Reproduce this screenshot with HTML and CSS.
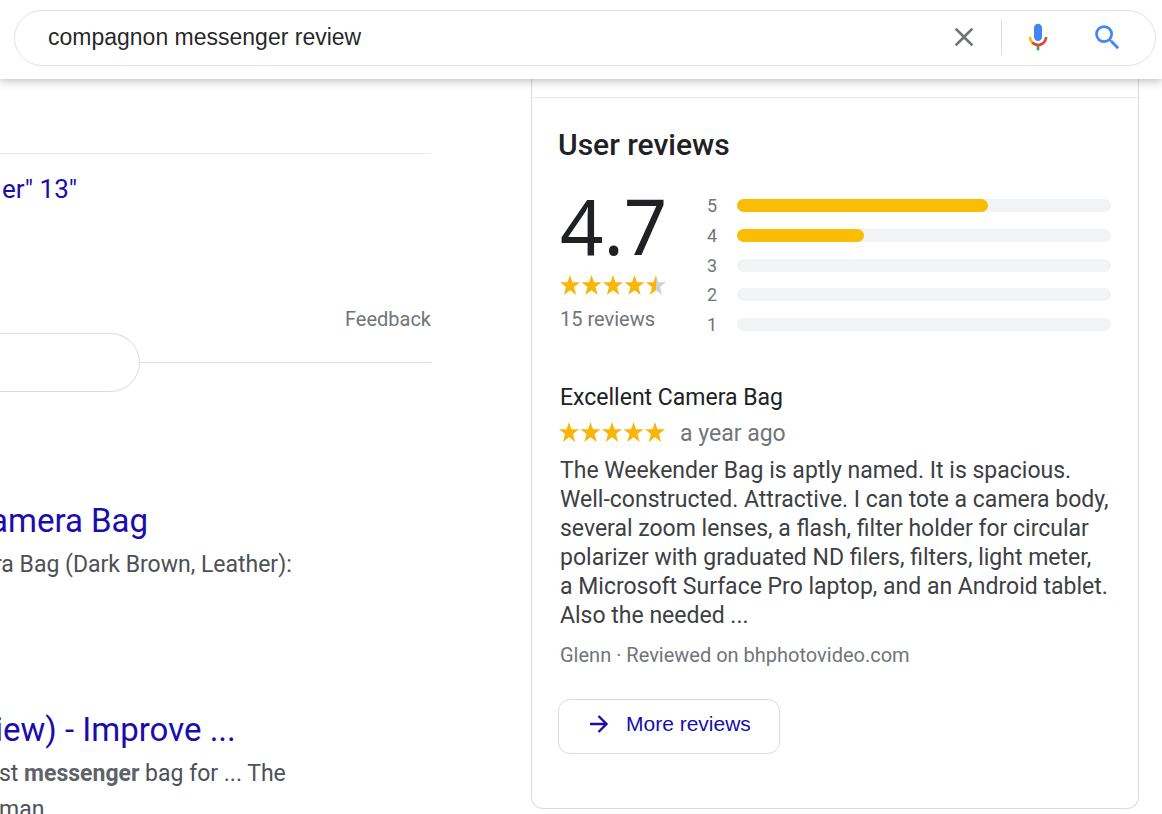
FILE: index.html
```html
<!DOCTYPE html>
<html lang="en">
<head>
<meta charset="utf-8">
<title>compagnon messenger review</title>
<link rel="stylesheet" href="styles.css">
</head>
<body>
<svg class="sprite" aria-hidden="true">
  <symbol id="star" viewBox="0 0 20 20"><path d="M10 0l2.5 7.2H20l-6 4.8 2.2 8L10 15.3 3.8 20 6 12 0 7.2h7.5z"/></symbol>
</svg>
<header class="topbar">
  <form class="search">
    <input class="search-input" type="text" aria-label="Search" value="compagnon messenger review">
    <button class="icon-button clear" type="reset" aria-label="Clear">
      <svg width="32" height="32" viewBox="0 0 24 24"><path fill="#70757a" d="M19 6.41L17.59 5 12 10.59 6.41 5 5 6.41 10.59 12 5 17.59 6.41 19 12 13.41 17.59 19 19 17.59 13.41 12z"/></svg>
    </button>
    <span class="divider"></span>
    <button class="icon-button mic" type="button" aria-label="Search by voice">
      <svg width="32" height="32" viewBox="0 0 24 24"><path fill="#4285f4" d="m12 15c1.66 0 3-1.31 3-2.97v-7.06c0-1.66-1.34-2.97-3-2.97s-3 1.31-3 2.97v7.06c0 1.66 1.34 2.97 3 2.97"/><path fill="#34a853" d="m11 18.08h2v3.92h-2z"/><path fill="#fbbc05" d="m7.05 16.87c-1.27-1.33-2.05-2.83-2.05-4.87h2c0 1.45.56 2.42 1.47 3.38v.32l-1.15 1.18z"/><path fill="#ea4335" d="m12 16.93a4.97 5.25 0 0 1-3.54-1.55l-1.41 1.49c1.26 1.34 3.02 2.13 4.95 2.13 3.87 0 6.99-2.92 6.99-7h-1.99c0 2.92-2.24 4.93-5 4.93z"/></svg>
    </button>
    <button class="icon-button go" type="submit" aria-label="Search">
      <svg width="33" height="33" viewBox="0 0 24 24"><path fill="#4285f4" d="M15.5 14h-.79l-.28-.27A6.47 6.47 0 0 0 16 9.5 6.5 6.5 0 1 0 9.5 16c1.61 0 3.09-.59 4.23-1.57l.27.28v.79l5 4.99L20.49 19l-4.99-5zm-6 0C7.01 14 5 11.99 5 9.5S7.01 5 9.5 5 14 7.01 14 9.5 11.99 14 9.5 14z"/></svg>
    </button>
  </form>
</header>
<main class="content">
  <section class="results">
    <div class="related"><a href="#">er" 13"</a></div>
    <a class="feedback" href="#">Feedback</a>
    <div class="more-row"><button class="more-pill" type="button" aria-label="More"></button></div>
    <article class="result">
      <h3><a href="#">amera Bag</a></h3>
      <p>ra Bag (Dark Brown, Leather):</p>
    </article>
    <article class="result last">
      <h3><a href="#">iew) - Improve ...</a></h3>
      <p>st <b>messenger</b> bag for ... The<br>man</p>
    </article>
  </section>
  <aside class="panel">
    <div class="reviews">
      <h2>User reviews</h2>
      <div class="summary">
        <div class="score">
          <span class="score-value">4.7</span>
          <svg class="stars" width="106" height="20" viewBox="0 0 106 20" role="img" aria-label="4.7 out of 5">
            <defs><linearGradient id="half"><stop offset=".5" stop-color="#f9b60a"/><stop offset=".5" stop-color="#d2d2d2"/></linearGradient></defs>
            <use href="#star" width="20" height="20"/><use href="#star" x="21.5" width="20" height="20"/><use href="#star" x="43" width="20" height="20"/><use href="#star" x="64.5" width="20" height="20"/><path fill="url(#half)" transform="translate(86)" d="M10 0l2.5 7.2H20l-6 4.8 2.2 8L10 15.3 3.8 20 6 12 0 7.2h7.5z"/>
          </svg>
          <span class="score-count">15 reviews</span>
        </div>
        <ul class="bars">
          <li><span>5</span><div class="track"><div class="fill" style="width:67%"></div></div></li>
          <li><span>4</span><div class="track"><div class="fill" style="width:34%"></div></div></li>
          <li><span>3</span><div class="track"></div></li>
          <li><span>2</span><div class="track"></div></li>
          <li><span>1</span><div class="track"></div></li>
        </ul>
      </div>
      <article class="review">
        <h4>Excellent Camera Bag</h4>
        <div class="review-meta">
          <svg class="stars" width="106" height="20" viewBox="0 0 106 20" role="img" aria-label="5 out of 5">
            <use href="#star" width="20" height="20"/><use href="#star" x="21.5" width="20" height="20"/><use href="#star" x="43" width="20" height="20"/><use href="#star" x="64.5" width="20" height="20"/><use href="#star" x="86" width="20" height="20"/>
          </svg>
          <span>a year ago</span>
        </div>
        <p class="review-text">The Weekender Bag is aptly named. It is spacious.<br>Well-constructed. Attractive. I can tote a camera body,<br>several zoom lenses, a flash, filter holder for circular<br>polarizer with graduated ND filers, filters, light meter,<br>a Microsoft Surface Pro laptop, and an Android tablet.<br>Also the needed ...</p>
        <p class="review-source">Glenn · Reviewed on bhphotovideo.com</p>
      </article>
      <a class="more-reviews" href="#">
        <svg width="20" height="20" viewBox="0 0 20 20"><path fill="none" stroke="#1a0dab" stroke-width="2.400" d="M1 10h16M9.500 2l8 8-8 8"/></svg>
        More reviews
      </a>
    </div>
  </aside>
</main>
</body>
</html>
```
FILE: styles.css
```css
* { box-sizing: border-box; }
body {
  margin: 0;
  height: 100vh;
  display: flex;
  flex-direction: column;
  overflow: hidden;
  background: #fff;
  color: #202124;
  font-family: Roboto, "Liberation Sans", sans-serif;
}
a { color: #1a0dab; text-decoration: none; }
h2, h3, h4, p, ul { margin: 0; padding: 0; font-weight: 400; }
.sprite { display: none; }

.topbar {
  flex: none;
  z-index: 1;
  padding: 10px 6px 13px 14px;
  background: #fff;
  box-shadow: 0 1px 10px rgba(32, 33, 36, .36);
}
.search {
  display: flex;
  align-items: center;
  height: 56px;
  padding: 0 28px 2px 33px;
  border: 1px solid #dfe1e5;
  border-radius: 28px;
}
.search-input {
  flex: 1;
  min-width: 0;
  padding: 0;
  border: 0;
  outline: 0;
  background: none;
  color: rgba(0, 0, 0, .87);
  font: 23px/32px "Liberation Sans", Arial, sans-serif;
}
.icon-button {
  display: flex;
  align-items: center;
  justify-content: center;
  width: 40px;
  height: 40px;
  padding: 0;
  border: 0;
  background: none;
}
.divider { width: 1px; height: 35px; margin: 0 16px 0 17px; background: #dadce0; }
.mic { margin-right: 29px; }

.content {
  flex: 1;
  min-height: 0;
  display: grid;
  grid-template-columns: minmax(0, 431fr) minmax(0, 608fr);
  gap: 100px;
  padding-right: 23px;
}
.results { display: flex; flex-direction: column; padding-top: 74px; overflow: hidden; }
.related {
  padding: 19px 0 0 2px;
  border-top: 1px solid #ebebeb;
  font-size: 26px;
  line-height: 32px;
}
.feedback {
  align-self: flex-end;
  margin-top: 102px;
  color: #70757a;
  font-size: 20px;
  line-height: 24px;
}
.more-row { display: flex; align-items: center; margin: 2px 0 108px; }
.more-row::after { content: ""; flex: 1; height: 1px; background: #dadce0; }
.more-pill {
  width: 140px;
  height: 59px;
  border: 1px solid #dadce0;
  border-left: 0;
  border-radius: 0 30px 30px 0;
  background: #fff;
}
.result { margin: 0 0 126px -6px; white-space: nowrap; }
.result.last { margin-left: -1px; }
.result h3 { margin-left: -4px; font-size: 33px; line-height: 42px; }
.result p { margin-top: 5px; color: #4d5156; font-size: 23px; line-height: 36px; }
.result b { color: #5f6368; }

.panel {
  align-self: start;
  padding-top: 18px;
  border: 1px solid #dadce0;
  border-top: 0;
  border-radius: 0 0 12px 12px;
}
.reviews { padding: 27px 27px 54px 26px; border-top: 1px solid #ebebeb; }
.reviews h2 { font-size: 30px; line-height: 40px; font-weight: 500; }
.summary { display: flex; gap: 40px; padding-top: 23px; }
.score { display: flex; flex-direction: column; align-items: flex-start; width: 109px; padding-left: 2px; }
.score-value { font: 76px/76px "Noto Sans", sans-serif; }
.score-count { margin-top: 12px; color: #70757a; font-size: 20px; line-height: 24px; }
.stars { fill: #f9b60a; margin-top: 11px; }
.bars {
  flex: 1;
  display: flex;
  flex-direction: column;
  justify-content: space-between;
  height: 151px;
  list-style: none;
  padding-top: 3px;
}
.bars li { display: flex; align-items: center; height: 29px; color: #70757a; font-size: 18px; }
.bars span { width: 30px; }
.track { flex: 1; height: 13px; border-radius: 7px; background: #f1f3f4; }
.fill { height: 100%; border-radius: 7px; background: #fbbc04; }
.review { padding: 43px 0 0 2px; }
.review h4 { font-size: 23px; line-height: 32px; }
.review-meta { display: flex; align-items: flex-start; gap: 15px; margin: 4px 0 6px; color: #70757a; font-size: 23px; line-height: 32px; }
.review-meta .stars { margin: 4px 0 0 -1px; }
.review-text { color: #3c4043; font-size: 23px; line-height: 29px; white-space: nowrap; }
.review-source { margin-top: 12px; color: #70757a; font-size: 20px; line-height: 26px; }
.more-reviews {
  display: inline-flex;
  align-items: center;
  gap: 17px;
  height: 55px;
  margin-top: 31px;
  padding: 0 28px 6px 30px;
  border: 1px solid #dadce0;
  border-radius: 12px;
  font: 21px/28px "Liberation Sans", Arial, sans-serif;
}
```
